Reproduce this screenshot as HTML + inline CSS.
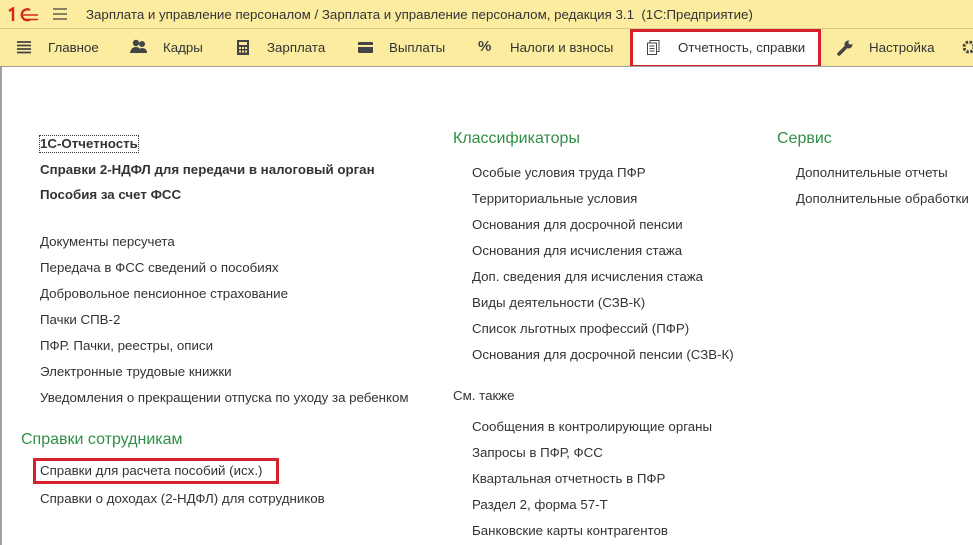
<!DOCTYPE html>
<html><head><meta charset="utf-8"><style>
*{margin:0;padding:0;box-sizing:border-box}
body{width:973px;height:545px;overflow:hidden;background:#fff;font-family:"Liberation Sans",Arial,sans-serif;color:#333;position:relative}
.t{position:absolute;white-space:nowrap;font-size:13.3px;line-height:16px}
.h{position:absolute;white-space:nowrap;font-size:16px;line-height:20px;color:#2f8f46}
#title{position:absolute;left:0;top:0;width:973px;height:29px;background:#fbeca0;border-bottom:1px solid #d9c98a}
#bar{position:absolute;left:0;top:29px;width:973px;height:37px;background:#fbeca0}
#content{position:absolute;left:0;top:66px;width:973px;height:479px;border-top:1px solid #a0a0a0;border-left:2px solid #a0a0a0;background:#fff}
.nav{position:absolute;top:40px;font-size:13.3px;line-height:16px;color:#333;white-space:nowrap}
</style></head><body>
<div id="title">
 <svg style="position:absolute;left:8px;top:7px" width="30" height="15" viewBox="0 0 30 15"><path d="M1 4 L5 1.5 V14" stroke="#d7261e" stroke-width="2.5" fill="none"/><path d="M22 3 A5.5 5.5 0 1 0 22 12.5" stroke="#d7261e" stroke-width="2.3" fill="none"/><path d="M15 8 H30 M15 12.5 H30" stroke="#d7261e" stroke-width="1.5"/></svg>
 <svg style="position:absolute;left:53px;top:8px" width="14" height="12"><path d="M0 1H14M0 6H14M0 11H14" stroke="#444" stroke-width="1.3"/></svg>
 <div class="t" style="left:86px;top:7px;color:#333">Зарплата и управление персоналом / Зарплата и управление персоналом, редакция 3.1&nbsp; (1С:Предприятие)</div>
</div>
<div id="bar"></div>
<svg style="position:absolute;left:17px;top:41px" width="14" height="13"><path d="M0 1H14M0 4.5H14M0 8H14M0 11.5H14" stroke="#444" stroke-width="1.8"/></svg>
<div class="nav" style="left:48px">Главное</div>
<svg style="position:absolute;left:130px;top:39px" width="18" height="15"><circle cx="6" cy="4" r="3.2" fill="#444"/><circle cx="12" cy="5" r="3" fill="#444"/><path d="M0 14 Q1 8 6 8 Q11 8 11 14Z M8 14 Q9 9 12 9 Q17 9 17 14Z" fill="#444"/></svg>
<div class="nav" style="left:163px">Кадры</div>
<svg style="position:absolute;left:237px;top:40px" width="12" height="15"><rect x="0" y="0" width="12" height="15" fill="#444"/><rect x="2" y="2" width="8" height="3" fill="#fbeca0"/><g fill="#fbeca0"><rect x="2" y="7" width="2" height="2"/><rect x="5" y="7" width="2" height="2"/><rect x="8" y="7" width="2" height="2"/><rect x="2" y="10.5" width="2" height="2"/><rect x="5" y="10.5" width="2" height="2"/><rect x="8" y="10.5" width="2" height="2"/></g></svg>
<div class="nav" style="left:267px">Зарплата</div>
<svg style="position:absolute;left:358px;top:42px" width="15" height="11"><rect width="15" height="11" rx="1" fill="#444"/><rect x="0" y="3" width="15" height="2" fill="#fbeca0"/></svg>
<div class="nav" style="left:389px">Выплаты</div>
<div class="nav" style="left:478px;font-weight:bold;font-size:15px;top:39px;color:#444">%</div>
<div class="nav" style="left:510px">Налоги и взносы</div>
<div style="position:absolute;left:630px;top:29px;width:191px;height:39px;background:#fff;border:3px solid #d6222a"></div>
<svg style="position:absolute;left:647px;top:40px" width="13" height="15"><rect x="3" y="0.5" width="9" height="11" fill="none" stroke="#444"/><rect x="0.5" y="3" width="9" height="11.5" fill="#fff" stroke="#444"/><path d="M2.5 6H7.5M2.5 8.5H7.5M2.5 11H7.5" stroke="#444"/></svg>
<div class="nav" style="left:678px">Отчетность, справки</div>
<svg style="position:absolute;left:837px;top:40px" width="16" height="16"><path d="M2 14 L9 7" stroke="#444" stroke-width="3.5" stroke-linecap="round"/><circle cx="11.5" cy="4.5" r="4" fill="#444"/><circle cx="13.5" cy="2.5" r="2" fill="#fbeca0"/></svg>
<div class="nav" style="left:869px">Настройка</div>
<svg style="position:absolute;left:962px;top:40px" width="14" height="14"><circle cx="7" cy="7" r="5" fill="none" stroke="#444" stroke-width="3" stroke-dasharray="2.5 1.5"/></svg>
<div id="content"></div>

<div class="t" style="left:40px;top:136px;font-weight:bold;outline:1px dotted #333">1С-Отчетность</div>
<div class="t" style="left:40px;top:162px;font-weight:bold">Справки 2-НДФЛ для передачи в налоговый орган</div>
<div class="t" style="left:40px;top:187px;font-weight:bold">Пособия за счет ФСС</div>
<div class="t" style="left:40px;top:234px">Документы персучета</div>
<div class="t" style="left:40px;top:260px">Передача в ФСС сведений о пособиях</div>
<div class="t" style="left:40px;top:286px">Добровольное пенсионное страхование</div>
<div class="t" style="left:40px;top:312px">Пачки СПВ-2</div>
<div class="t" style="left:40px;top:338px">ПФР. Пачки, реестры, описи</div>
<div class="t" style="left:40px;top:364px">Электронные трудовые книжки</div>
<div class="t" style="left:40px;top:390px">Уведомления о прекращении отпуска по уходу за ребенком</div>
<div class="h" style="left:21px;top:430px">Справки сотрудникам</div>
<div style="position:absolute;left:33px;top:458px;width:246px;height:26px;border:3px solid #d6222a"></div>
<div class="t" style="left:40px;top:463px">Справки для расчета пособий (исх.)</div>
<div class="t" style="left:40px;top:491px">Справки о доходах (2-НДФЛ) для сотрудников</div>

<div class="h" style="left:453px;top:129px">Классификаторы</div>
<div class="t" style="left:472px;top:165px">Особые условия труда ПФР</div>
<div class="t" style="left:472px;top:191px">Территориальные условия</div>
<div class="t" style="left:472px;top:217px">Основания для досрочной пенсии</div>
<div class="t" style="left:472px;top:243px">Основания для исчисления стажа</div>
<div class="t" style="left:472px;top:269px">Доп. сведения для исчисления стажа</div>
<div class="t" style="left:472px;top:295px">Виды деятельности (СЗВ-К)</div>
<div class="t" style="left:472px;top:321px">Список льготных профессий (ПФР)</div>
<div class="t" style="left:472px;top:347px">Основания для досрочной пенсии (СЗВ-К)</div>
<div class="t" style="left:453px;top:388px">См. также</div>
<div class="t" style="left:472px;top:419px">Сообщения в контролирующие органы</div>
<div class="t" style="left:472px;top:445px">Запросы в ПФР, ФСС</div>
<div class="t" style="left:472px;top:471px">Квартальная отчетность в ПФР</div>
<div class="t" style="left:472px;top:497px">Раздел 2, форма 57-Т</div>
<div class="t" style="left:472px;top:523px">Банковские карты контрагентов</div>

<div class="h" style="left:777px;top:129px">Сервис</div>
<div class="t" style="left:796px;top:165px">Дополнительные отчеты</div>
<div class="t" style="left:796px;top:191px">Дополнительные обработки</div>
</body></html>
